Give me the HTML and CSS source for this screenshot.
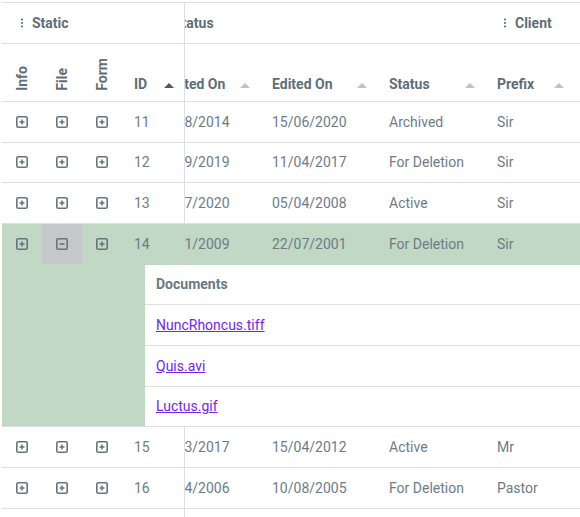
FILE: index.html
```html
<!DOCTYPE html>
<html>
<head>
<meta charset="utf-8">
<link rel="stylesheet" href="styles.css">
</head>
<body>
<div class="grid">
  <div class="row group-row">
    <div class="frozen">
      <div class="group g-static"><svg class="dots" viewBox="0 0 4 12"><circle cx="2" cy="2.5" r="1.1"/><circle cx="2" cy="6" r="1.1"/><circle cx="2" cy="9.5" r="1.1"/></svg><span>Static</span></div>
    </div>
    <div class="viewport"><div class="track">
      <div class="group g-status"><svg class="dots" viewBox="0 0 4 12"><circle cx="2" cy="2.5" r="1.1"/><circle cx="2" cy="6" r="1.1"/><circle cx="2" cy="9.5" r="1.1"/></svg><span>Status</span></div>
      <div class="group g-client"><svg class="dots" viewBox="0 0 4 12"><circle cx="2" cy="2.5" r="1.1"/><circle cx="2" cy="6" r="1.1"/><circle cx="2" cy="9.5" r="1.1"/></svg><span>Client</span></div>
    </div></div>
  </div>

  <div class="row head-row">
    <div class="frozen">
      <div class="hcell c-icon vert"><span>Info</span></div>
      <div class="hcell c-icon vert"><span>File</span></div>
      <div class="hcell c-icon vert"><span>Form</span></div>
      <div class="hcell c-id"><span class="label">ID</span><i class="sort active"></i></div>
    </div>
    <div class="viewport"><div class="track">
      <div class="hcell c-created"><span class="label">Created On</span><i class="sort"></i></div>
      <div class="hcell c-edited"><span class="label">Edited On</span><i class="sort"></i></div>
      <div class="hcell c-status"><span class="label">Status</span><i class="sort"></i></div>
      <div class="hcell c-prefix"><span class="label">Prefix</span><i class="sort"></i></div>
    </div></div>
  </div>

  <div class="row drow">
    <div class="frozen">
      <div class="cell c-icon"><svg class="ic" viewBox="0 0 12 12"><rect x=".8" y=".8" width="10.4" height="10.4" rx="1.5"/><path d="M3.5 6h5M6 3.5v5"/></svg></div>
      <div class="cell c-icon"><svg class="ic" viewBox="0 0 12 12"><rect x=".8" y=".8" width="10.4" height="10.4" rx="1.5"/><path d="M3.5 6h5M6 3.5v5"/></svg></div>
      <div class="cell c-icon"><svg class="ic" viewBox="0 0 12 12"><rect x=".8" y=".8" width="10.4" height="10.4" rx="1.5"/><path d="M3.5 6h5M6 3.5v5"/></svg></div>
      <div class="cell c-id">11</div>
    </div>
    <div class="viewport"><div class="track">
      <div class="cell c-created">12/08/2014</div>
      <div class="cell c-edited">15/06/2020</div>
      <div class="cell c-status">Archived</div>
      <div class="cell c-prefix">Sir</div>
    </div></div>
  </div>

  <div class="row drow">
    <div class="frozen">
      <div class="cell c-icon"><svg class="ic" viewBox="0 0 12 12"><rect x=".8" y=".8" width="10.4" height="10.4" rx="1.5"/><path d="M3.5 6h5M6 3.5v5"/></svg></div>
      <div class="cell c-icon"><svg class="ic" viewBox="0 0 12 12"><rect x=".8" y=".8" width="10.4" height="10.4" rx="1.5"/><path d="M3.5 6h5M6 3.5v5"/></svg></div>
      <div class="cell c-icon"><svg class="ic" viewBox="0 0 12 12"><rect x=".8" y=".8" width="10.4" height="10.4" rx="1.5"/><path d="M3.5 6h5M6 3.5v5"/></svg></div>
      <div class="cell c-id">12</div>
    </div>
    <div class="viewport"><div class="track">
      <div class="cell c-created">17/09/2019</div>
      <div class="cell c-edited">11/04/2017</div>
      <div class="cell c-status">For Deletion</div>
      <div class="cell c-prefix">Sir</div>
    </div></div>
  </div>

  <div class="row drow">
    <div class="frozen">
      <div class="cell c-icon"><svg class="ic" viewBox="0 0 12 12"><rect x=".8" y=".8" width="10.4" height="10.4" rx="1.5"/><path d="M3.5 6h5M6 3.5v5"/></svg></div>
      <div class="cell c-icon"><svg class="ic" viewBox="0 0 12 12"><rect x=".8" y=".8" width="10.4" height="10.4" rx="1.5"/><path d="M3.5 6h5M6 3.5v5"/></svg></div>
      <div class="cell c-icon"><svg class="ic" viewBox="0 0 12 12"><rect x=".8" y=".8" width="10.4" height="10.4" rx="1.5"/><path d="M3.5 6h5M6 3.5v5"/></svg></div>
      <div class="cell c-id">13</div>
    </div>
    <div class="viewport"><div class="track">
      <div class="cell c-created">03/07/2020</div>
      <div class="cell c-edited">05/04/2008</div>
      <div class="cell c-status">Active</div>
      <div class="cell c-prefix">Sir</div>
    </div></div>
  </div>

  <div class="row drow sel">
    <div class="frozen">
      <div class="cell c-icon"><svg class="ic" viewBox="0 0 12 12"><rect x=".8" y=".8" width="10.4" height="10.4" rx="1.5"/><path d="M3.5 6h5M6 3.5v5"/></svg></div>
      <div class="cell c-icon open"><svg class="ic" viewBox="0 0 12 12"><rect x=".8" y=".8" width="10.4" height="10.4" rx="1.5"/><path d="M3.5 6h5"/></svg></div>
      <div class="cell c-icon"><svg class="ic" viewBox="0 0 12 12"><rect x=".8" y=".8" width="10.4" height="10.4" rx="1.5"/><path d="M3.5 6h5M6 3.5v5"/></svg></div>
      <div class="cell c-id">14</div>
    </div>
    <div class="viewport"><div class="track">
      <div class="cell c-created">28/01/2009</div>
      <div class="cell c-edited">22/07/2001</div>
      <div class="cell c-status">For Deletion</div>
      <div class="cell c-prefix">Sir</div>
    </div></div>
  </div>

  <div class="row detail">
    <div class="spacer"></div>
    <div class="panel">
      <div class="item title">Documents</div>
      <div class="item"><a href="#">NuncRhoncus.tiff</a></div>
      <div class="item"><a href="#">Quis.avi</a></div>
      <div class="item"><a href="#">Luctus.gif</a></div>
    </div>
  </div>

  <div class="row drow">
    <div class="frozen">
      <div class="cell c-icon"><svg class="ic" viewBox="0 0 12 12"><rect x=".8" y=".8" width="10.4" height="10.4" rx="1.5"/><path d="M3.5 6h5M6 3.5v5"/></svg></div>
      <div class="cell c-icon"><svg class="ic" viewBox="0 0 12 12"><rect x=".8" y=".8" width="10.4" height="10.4" rx="1.5"/><path d="M3.5 6h5M6 3.5v5"/></svg></div>
      <div class="cell c-icon"><svg class="ic" viewBox="0 0 12 12"><rect x=".8" y=".8" width="10.4" height="10.4" rx="1.5"/><path d="M3.5 6h5M6 3.5v5"/></svg></div>
      <div class="cell c-id">15</div>
    </div>
    <div class="viewport"><div class="track">
      <div class="cell c-created">19/03/2017</div>
      <div class="cell c-edited">15/04/2012</div>
      <div class="cell c-status">Active</div>
      <div class="cell c-prefix">Mr</div>
    </div></div>
  </div>

  <div class="row drow">
    <div class="frozen">
      <div class="cell c-icon"><svg class="ic" viewBox="0 0 12 12"><rect x=".8" y=".8" width="10.4" height="10.4" rx="1.5"/><path d="M3.5 6h5M6 3.5v5"/></svg></div>
      <div class="cell c-icon"><svg class="ic" viewBox="0 0 12 12"><rect x=".8" y=".8" width="10.4" height="10.4" rx="1.5"/><path d="M3.5 6h5M6 3.5v5"/></svg></div>
      <div class="cell c-icon"><svg class="ic" viewBox="0 0 12 12"><rect x=".8" y=".8" width="10.4" height="10.4" rx="1.5"/><path d="M3.5 6h5M6 3.5v5"/></svg></div>
      <div class="cell c-id">16</div>
    </div>
    <div class="viewport"><div class="track">
      <div class="cell c-created">06/04/2006</div>
      <div class="cell c-edited">10/08/2005</div>
      <div class="cell c-status">For Deletion</div>
      <div class="cell c-prefix">Pastor</div>
    </div></div>
  </div>

  <div class="row filler">
    <div class="frozen"></div>
  </div>
</div>
</body>
</html>
```

FILE: styles.css
```css
* { box-sizing: border-box; }
html, body { margin: 0; height: 100%; }
body {
  font-family: Roboto, "Noto Sans", sans-serif;
  font-size: 14px;
  line-height: 20px;
  color: #6e7c87;
  background: #fff;
  overflow: hidden;
}

.grid {
  margin: 2px 0 0 2px;
  height: calc(100% - 2px);
  border-top: 1px solid #dedee6;
  display: flex;
  flex-direction: column;
  overflow: hidden;
}

.row {
  display: flex;
  flex-shrink: 0;
  border-bottom: 1px solid #dedee6;
}

.frozen {
  display: flex;
  flex-shrink: 0;
  width: 183px;
  border-right: 1px solid #dedee6;
}

.viewport {
  flex: 1;
  min-width: 0;
  overflow: hidden;
  display: flex;
}
.track {
  display: flex;
  flex-shrink: 0;
  margin-left: -42px;
}

/* column widths */
.c-icon { width: 40px; flex-shrink: 0; }
.c-id { width: 62px; flex-shrink: 0; }
.c-created { width: 117px; flex-shrink: 0; }
.c-edited { width: 117px; flex-shrink: 0; }
.c-status { width: 108px; flex-shrink: 0; }
.c-prefix { width: 89px; flex-shrink: 0; }

/* group header row */
.group-row { height: 41px; }
.group {
  display: flex;
  align-items: center;
  gap: 8px;
  padding-left: 18px;
  font-weight: 700;
  color: #5f6e79;
  flex-shrink: 0;
}
.g-static { width: 182px; }
.g-status { width: 342px; }
.g-client { width: 240px; }
.dots { width: 4px; height: 12px; fill: #5f6e79; }

/* column header row */
.head-row { height: 58px; }
.hcell {
  display: flex;
  align-items: flex-end;
  padding: 0 10px 7px 12px;
  font-weight: 700;
  color: #5f6e79;
}
.hcell .label { flex: 1; white-space: nowrap; }
.sort {
  width: 0;
  height: 0;
  border-left: 5px solid transparent;
  border-right: 5px solid transparent;
  border-bottom: 5px solid #c2c2c6;
  margin-bottom: 6px;
}
.sort.active { border-bottom-color: #55595e; }
.vert {
  justify-content: center;
  padding: 0 0 10px;
}
.vert span {
  writing-mode: vertical-rl;
  transform: rotate(180deg);
}

/* data rows */
.drow { height: 40.67px; }
.cell {
  display: flex;
  align-items: center;
  padding: 0 12px;
  white-space: nowrap;
}
.cell.c-icon { justify-content: center; padding: 0; }
.ic {
  width: 12px;
  height: 12px;
  fill: none;
  stroke: #66747f;
  stroke-width: 1.6;
}
.sel { background: #c0d8c4; border-bottom-color: #c0d8c4; }
.sel .frozen { border-right-color: #c9d2d0; }
.cell.open { background: #c6c7cb; }

/* detail */
.detail { border-bottom: none; }
.spacer {
  width: 143px;
  flex-shrink: 0;
  background: #c0d8c4;
  border-bottom: 1px solid #dedee6;
}
.panel { flex: 1; background: #fff; }
.item {
  height: 40.67px;
  display: flex;
  align-items: center;
  padding-left: 11px;
  border-bottom: 1px solid #dedee6;
}
.item.title { font-weight: 700; color: #6a7984; }
.item a { color: #7424f0; text-decoration: underline; }

.filler { flex: 1; border-bottom: none; }
```
